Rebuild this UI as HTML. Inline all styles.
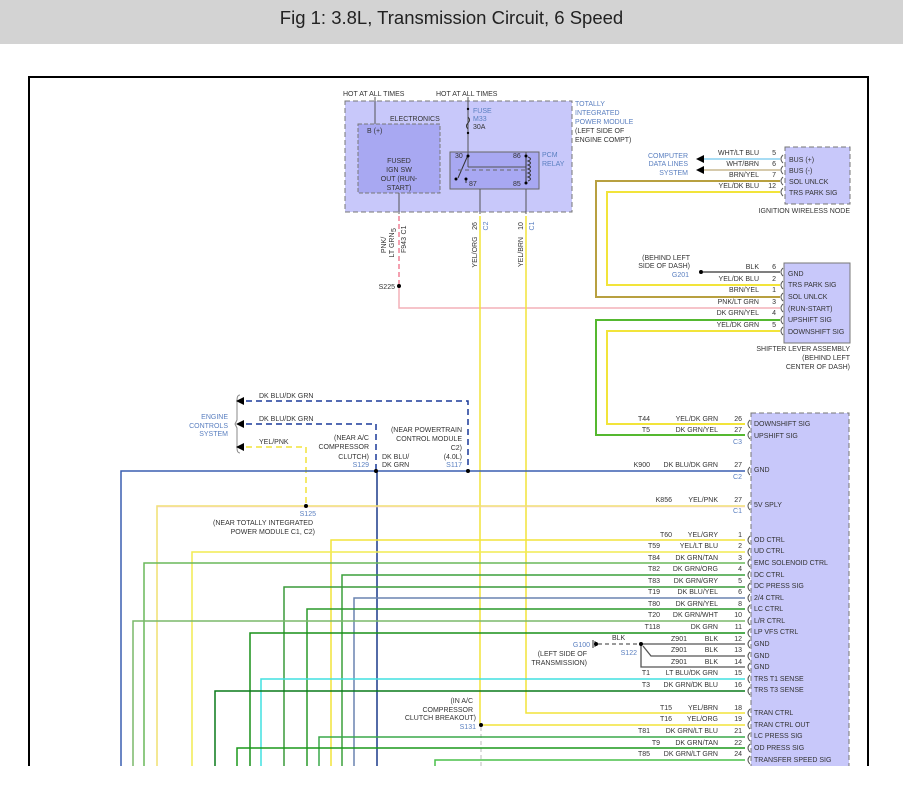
<!DOCTYPE html>
<html><head><meta charset="utf-8"><style>
html,body{margin:0;padding:0;background:#fff;}
body{width:903px;height:788px;overflow:hidden;position:relative;font-family:"Liberation Sans",sans-serif;}
.hd{position:absolute;left:0;top:0;width:903px;height:44px;background:#d3d3d3;color:#222;font-size:18.5px;line-height:35px;text-align:center;}
svg{position:absolute;left:0;top:0;}
text{font-family:"Liberation Sans",sans-serif;font-size:7px;fill:#333;}
.b{fill:#5a7fc0;}
</style></head><body>
<div class="hd">Fig 1: 3.8L, Transmission Circuit, 6 Speed</div>
<svg width="903" height="788" viewBox="0 0 903 788">
<defs><clipPath id="c"><rect x="0" y="0" width="903" height="766"/></clipPath></defs>
<g clip-path="url(#c)" fill="none">
<path d="M29,790 V77 H868 V790" stroke="#000" stroke-width="2"/>
<rect x="345" y="101" width="227" height="111" fill="#c8c8fa" stroke="#777" stroke-dasharray="5,3"/>
<rect x="358" y="124" width="82" height="69" fill="#a8a8f2" stroke="#777" stroke-dasharray="4,2"/>
<rect x="450" y="152" width="89" height="37" fill="#a8a8f2" stroke="#666"/>
<path d="M375,97 V124 M468,97 V167 M468,167 H526 V152 M480,189 V214 M526,189 V214 M399,193 V214" stroke="#555"/>
<path d="M468,117 q3,3 0,6 q-3,3 0,6" stroke="#333"/>
<path d="M468,155 L458,178 M466,178 V183 M526,155 V183" stroke="#333"/>
<path d="M458,170 H526" stroke="#666" stroke-dasharray="4,3"/>
<path d="M528,157 q5,2 0,4 q5,2 0,4 q5,2 0,4 q5,2 0,4 q5,2 0,4 q5,2 0,4" stroke="#333"/>
<g fill="#000"><circle cx="468" cy="156" r="1.5"/><circle cx="456" cy="179" r="1.5"/><circle cx="466" cy="179" r="1.5"/><circle cx="526" cy="156" r="1.5"/><circle cx="526" cy="183" r="1.5"/><circle cx="468" cy="109" r="1.2"/><circle cx="468" cy="133" r="1.2"/></g>
<path d="M399,216 V286" stroke="#f4a0b0" stroke-width="2" stroke-dasharray="5,3"/>
<path d="M399,286 V308 H780" stroke="#f4b0b8" stroke-width="1.5"/>
<path d="M480,216 V725 H745" stroke="#f2e43a" stroke-width="1.5"/>
<path d="M526,216 V713 H745" stroke="#f2e43a" stroke-width="1.5"/>
<path d="M481,727 V770" stroke="#bbb" stroke-dasharray="4,3"/>
<rect x="785" y="147" width="65" height="57" fill="#c8c8fa" stroke="#777" stroke-dasharray="5,3"/>
<path d="M704,159 H780" stroke="#8ad0f0" stroke-width="1.5"/>
<path d="M704,170 H780" stroke="#c8b890" stroke-width="1.5"/>
<path d="M780,181 H596 V297 H780" stroke="#b8a040" stroke-width="2"/>
<path d="M780,192 H607 V285 H780" stroke="#f2e43a" stroke-width="2"/>
<path d="M780,320 H596 V435 H745" stroke="#55b830" stroke-width="2"/>
<path d="M780,331 H607 V424 H745" stroke="#f2e43a" stroke-width="2"/>
<path d="M703,272 H780" stroke="#555" stroke-width="1.5"/>
<rect x="784" y="263" width="66" height="80" fill="#c8c8fa" stroke="#777"/>
<path d="M246,401 H468 V471" stroke="#1a3a9a" stroke-width="1.5" stroke-dasharray="6,4"/>
<path d="M246,424 H376 V471" stroke="#1a3a9a" stroke-width="1.5" stroke-dasharray="6,4"/>
<path d="M246,447 H306 V506" stroke="#f2e43a" stroke-width="1.5" stroke-dasharray="6,4"/>
<path d="M240,395 q-3,0 -3,5 v20 l-2,4 l2,4 v20 q0,5 3,5" stroke="#888"/>
<path d="M745,471 H121 V790" stroke="#3a5fb0" stroke-width="1.5"/>
<path d="M377,471 V790" stroke="#1a3a8a" stroke-width="1.5"/>
<path d="M745,506 H157 V790" stroke="#f0e070" stroke-width="1.5"/>
<path d="M745,507 H157" stroke="#f8c8c8" stroke-width="0.6"/>
<path d="M745,540 H331 V790" stroke="#f2e43a" stroke-width="1.5"/>
<path d="M745,552 H192 V790" stroke="#f2ec50" stroke-width="1.5"/>
<path d="M745,563 H144 V790" stroke="#6ab85a" stroke-width="1.5"/>
<path d="M745,575 H342 V790" stroke="#3ca03c" stroke-width="1.5"/>
<path d="M745,587 H284 V790" stroke="#3a9a3a" stroke-width="1.5"/>
<path d="M745,598 H354 V790" stroke="#6a84b0" stroke-width="1.5"/>
<path d="M745,609 H307 V790" stroke="#2a9a2a" stroke-width="1.5"/>
<path d="M745,621 H133 V790" stroke="#7ab86a" stroke-width="1.5"/>
<path d="M745,633 H250 V790" stroke="#189018" stroke-width="1.5"/>
<path d="M745,679 H261 V790" stroke="#40e0e0" stroke-width="1.5"/>
<path d="M745,691 H215 V790" stroke="#0a7a1a" stroke-width="1.5"/>
<path d="M745,737 H319 V790" stroke="#3aa84a" stroke-width="1.5"/>
<path d="M745,748 H237 V790" stroke="#1a981a" stroke-width="1.5"/>
<path d="M745,760 H435 V790" stroke="#4ac04a" stroke-width="1.5"/>
<path d="M598,644 H641" stroke="#333" stroke-dasharray="4,3"/>
<path d="M641,644 H745 M641,644 V667 H745 M643,646 L651,656 H745" stroke="#555" stroke-width="1.3"/>
<path d="M593,640 v8 M595,641 v6" stroke="#333"/>
<rect x="751" y="413" width="98" height="380" fill="#c8c8fa" stroke="#777" stroke-dasharray="5,3"/>
<g stroke="#555">
<path d="M750,420 q-4,4 0,8 M750,431 q-4,4 0,8 M750,467 q-4,4 0,8 M750,502 q-4,4 0,8 M750,536 q-4,4 0,8 M750,548 q-4,4 0,8 M750,559 q-4,4 0,8 M750,571 q-4,4 0,8 M750,583 q-4,4 0,8 M750,594 q-4,4 0,8 M750,605 q-4,4 0,8 M750,617 q-4,4 0,8 M750,629 q-4,4 0,8 M750,640 q-4,4 0,8 M750,652 q-4,4 0,8 M750,663 q-4,4 0,8 M750,675 q-4,4 0,8 M750,687 q-4,4 0,8 M750,709 q-4,4 0,8 M750,721 q-4,4 0,8 M750,733 q-4,4 0,8 M750,744 q-4,4 0,8 M750,756 q-4,4 0,8"/>
<path d="M783,155 q-4,4 0,8 M783,166 q-4,4 0,8 M783,177 q-4,4 0,8 M783,188 q-4,4 0,8 M783,268 q-4,4 0,8 M783,281 q-4,4 0,8 M783,293 q-4,4 0,8 M783,304 q-4,4 0,8 M783,316 q-4,4 0,8 M783,327 q-4,4 0,8"/>
</g>
<g fill="#000">
<circle cx="399" cy="286" r="2"/><circle cx="376" cy="471" r="2"/><circle cx="468" cy="471" r="2"/><circle cx="306" cy="506" r="2"/><circle cx="481" cy="725" r="2"/><circle cx="641" cy="644" r="2"/><circle cx="596" cy="644" r="2"/><circle cx="701" cy="272" r="2"/>
<path d="M236,401 l8,-4 v8z M236,424 l8,-4 v8z M236,447 l8,-4 v8z M696,159 l8,-4 v8z M696,170 l8,-4 v8z"/>
</g>
</g>
<text x="343" y="96">HOT AT ALL TIMES</text>
<text x="436" y="96">HOT AT ALL TIMES</text>
<text x="390" y="121">ELECTRONICS</text>
<text x="367" y="133">B (+)</text>
<text x="399" y="163" text-anchor="middle">FUSED</text>
<text x="399" y="172" text-anchor="middle">IGN SW</text>
<text x="399" y="181" text-anchor="middle">OUT (RUN-</text>
<text x="399" y="190" text-anchor="middle">START)</text>
<text x="473" y="113" class="b">FUSE</text>
<text x="473" y="121" class="b">M33</text>
<text x="473" y="129">30A</text>
<text x="455" y="158">30</text><text x="469" y="186">87</text><text x="513" y="158">86</text><text x="513" y="186">85</text>
<text x="542" y="157" class="b">PCM</text><text x="542" y="166" class="b">RELAY</text>
<text x="575" y="106" class="b">TOTALLY</text><text x="575" y="115" class="b">INTEGRATED</text><text x="575" y="124" class="b">POWER MODULE</text>
<text x="575" y="133">(LEFT SIDE OF</text><text x="575" y="142">ENGINE COMPT)</text>
<g transform="translate(396,230) rotate(-90)"><text x="0" y="0" text-anchor="middle">5</text></g>
<g transform="translate(406,230) rotate(-90)"><text x="0" y="0" text-anchor="middle">C1</text></g>
<g transform="translate(386,245) rotate(-90)"><text x="0" y="0" text-anchor="middle">PNK/</text></g>
<g transform="translate(394,245) rotate(-90)"><text x="0" y="0" text-anchor="middle">LT GRN</text></g>
<g transform="translate(406,245) rotate(-90)"><text x="0" y="0" text-anchor="middle">F943</text></g>
<g transform="translate(477,226) rotate(-90)"><text x="0" y="0" text-anchor="middle">26</text></g>
<g transform="translate(488,226) rotate(-90)"><text x="0" y="0" text-anchor="middle" class="b">C2</text></g>
<g transform="translate(477,252) rotate(-90)"><text x="0" y="0" text-anchor="middle">YEL/ORG</text></g>
<g transform="translate(523,226) rotate(-90)"><text x="0" y="0" text-anchor="middle">10</text></g>
<g transform="translate(534,226) rotate(-90)"><text x="0" y="0" text-anchor="middle" class="b">C1</text></g>
<g transform="translate(523,252) rotate(-90)"><text x="0" y="0" text-anchor="middle">YEL/BRN</text></g>
<text x="395" y="289" text-anchor="end">S225</text>
<text x="688" y="158" text-anchor="end" class="b">COMPUTER</text><text x="688" y="166" text-anchor="end" class="b">DATA LINES</text><text x="688" y="175" text-anchor="end" class="b">SYSTEM</text>
<g text-anchor="end">
<text x="759" y="155">WHT/LT BLU</text><text x="776" y="155">5</text>
<text x="759" y="166">WHT/BRN</text><text x="776" y="166">6</text>
<text x="759" y="177">BRN/YEL</text><text x="776" y="177">7</text>
<text x="759" y="188">YEL/DK BLU</text><text x="776" y="188">12</text>
<text x="759" y="269">BLK</text><text x="776" y="269">6</text>
<text x="759" y="281">YEL/DK BLU</text><text x="776" y="281">2</text>
<text x="759" y="292">BRN/YEL</text><text x="776" y="292">1</text>
<text x="759" y="304">PNK/LT GRN</text><text x="776" y="304">3</text>
<text x="759" y="315">DK GRN/YEL</text><text x="776" y="315">4</text>
<text x="759" y="327">YEL/DK GRN</text><text x="776" y="327">5</text>
<text x="690" y="260">(BEHIND LEFT</text><text x="690" y="268">SIDE OF DASH)</text>
<text x="689" y="277" class="b">G201</text>
<text x="850" y="213">IGNITION WIRELESS NODE</text>
<text x="850" y="351">SHIFTER LEVER ASSEMBLY</text><text x="850" y="360">(BEHIND LEFT</text><text x="850" y="369">CENTER OF DASH)</text>
</g>
<text x="789" y="162">BUS (+)</text><text x="789" y="173">BUS (-)</text><text x="789" y="184">SOL UNLCK</text><text x="789" y="195">TRS PARK SIG</text>
<text x="788" y="276">GND</text><text x="788" y="287">TRS PARK SIG</text><text x="788" y="299">SOL UNLCK</text><text x="788" y="311">(RUN-START)</text><text x="788" y="322">UPSHIFT SIG</text><text x="788" y="334">DOWNSHIFT SIG</text>
<text x="259" y="398">DK BLU/DK GRN</text><text x="259" y="421">DK BLU/DK GRN</text><text x="259" y="444">YEL/PNK</text>
<g text-anchor="end">
<text x="228" y="419" class="b">ENGINE</text><text x="228" y="428" class="b">CONTROLS</text><text x="228" y="436" class="b">SYSTEM</text>
<text x="369" y="440">(NEAR A/C</text><text x="369" y="449">COMPRESSOR</text><text x="369" y="459">CLUTCH)</text><text x="369" y="467" class="b">S129</text>
<text x="462" y="432">(NEAR POWERTRAIN</text><text x="462" y="441">CONTROL MODULE</text><text x="462" y="450">C2)</text><text x="462" y="459">(4.0L)</text><text x="462" y="467" class="b">S117</text>
<text x="316" y="516" class="b">S125</text>
<text x="313" y="525">(NEAR TOTALLY INTEGRATED</text><text x="315" y="534">POWER MODULE C1, C2)</text>
<text x="473" y="703">(IN A/C</text><text x="473" y="712">COMPRESSOR</text><text x="476" y="720">CLUTCH BREAKOUT)</text><text x="476" y="729" class="b">S131</text>
<text x="590" y="647" class="b">G100</text><text x="587" y="656">(LEFT SIDE OF</text><text x="587" y="665">TRANSMISSION)</text>
<text x="637" y="655" class="b">S122</text>
</g>
<text x="612" y="640">BLK</text>
<text x="382" y="459">DK BLU/</text><text x="382" y="467">DK GRN</text>
<g text-anchor="end">
<text x="650" y="421">T44</text><text x="718" y="421">YEL/DK GRN</text><text x="742" y="421">26</text>
<text x="650" y="432">T5</text><text x="718" y="432">DK GRN/YEL</text><text x="742" y="432">27</text><text x="742" y="444" class="b">C3</text>
<text x="650" y="467">K900</text><text x="718" y="467">DK BLU/DK GRN</text><text x="742" y="467">27</text><text x="742" y="479" class="b">C2</text>
<text x="672" y="502">K856</text><text x="718" y="502">YEL/PNK</text><text x="742" y="502">27</text><text x="742" y="513" class="b">C1</text>
<text x="672" y="537">T60</text><text x="718" y="537">YEL/GRY</text><text x="742" y="537">1</text>
<text x="660" y="548">T59</text><text x="718" y="548">YEL/LT BLU</text><text x="742" y="548">2</text>
<text x="660" y="560">T84</text><text x="718" y="560">DK GRN/TAN</text><text x="742" y="560">3</text>
<text x="660" y="571">T82</text><text x="718" y="571">DK GRN/ORG</text><text x="742" y="571">4</text>
<text x="660" y="583">T83</text><text x="718" y="583">DK GRN/GRY</text><text x="742" y="583">5</text>
<text x="660" y="594">T19</text><text x="718" y="594">DK BLU/YEL</text><text x="742" y="594">6</text>
<text x="660" y="606">T80</text><text x="718" y="606">DK GRN/YEL</text><text x="742" y="606">8</text>
<text x="660" y="617">T20</text><text x="718" y="617">DK GRN/WHT</text><text x="742" y="617">10</text>
<text x="660" y="629">T118</text><text x="718" y="629">DK GRN</text><text x="742" y="629">11</text>
<text x="687" y="641">Z901</text><text x="718" y="641">BLK</text><text x="742" y="641">12</text>
<text x="687" y="652">Z901</text><text x="718" y="652">BLK</text><text x="742" y="652">13</text>
<text x="687" y="664">Z901</text><text x="718" y="664">BLK</text><text x="742" y="664">14</text>
<text x="650" y="675">T1</text><text x="718" y="675">LT BLU/DK GRN</text><text x="742" y="675">15</text>
<text x="650" y="687">T3</text><text x="718" y="687">DK GRN/DK BLU</text><text x="742" y="687">16</text>
<text x="672" y="710">T15</text><text x="718" y="710">YEL/BRN</text><text x="742" y="710">18</text>
<text x="672" y="721">T16</text><text x="718" y="721">YEL/ORG</text><text x="742" y="721">19</text>
<text x="650" y="733">T81</text><text x="718" y="733">DK GRN/LT BLU</text><text x="742" y="733">21</text>
<text x="660" y="745">T9</text><text x="718" y="745">DK GRN/TAN</text><text x="742" y="745">22</text>
<text x="650" y="756">T85</text><text x="718" y="756">DK GRN/LT GRN</text><text x="742" y="756">24</text>
</g>
<g>
<text x="754" y="426">DOWNSHIFT SIG</text><text x="754" y="438">UPSHIFT SIG</text>
<text x="754" y="472">GND</text><text x="754" y="507">5V SPLY</text>
<text x="754" y="542">OD CTRL</text><text x="754" y="553">UD CTRL</text><text x="754" y="565">EMC SOLENOID CTRL</text><text x="754" y="577">DC CTRL</text><text x="754" y="588">DC PRESS SIG</text><text x="754" y="600">2/4 CTRL</text><text x="754" y="611">LC CTRL</text><text x="754" y="623">L/R CTRL</text><text x="754" y="634">LP VFS CTRL</text><text x="754" y="646">GND</text><text x="754" y="658">GND</text><text x="754" y="669">GND</text><text x="754" y="681">TRS T1 SENSE</text><text x="754" y="692">TRS T3 SENSE</text><text x="754" y="715">TRAN CTRL</text><text x="754" y="727">TRAN CTRL OUT</text><text x="754" y="738">LC PRESS SIG</text><text x="754" y="750">OD PRESS SIG</text><text x="754" y="762">TRANSFER SPEED SIG</text>
</g>
<rect x="0" y="766" width="903" height="22" fill="#fff"/>
</svg>
</body></html>
